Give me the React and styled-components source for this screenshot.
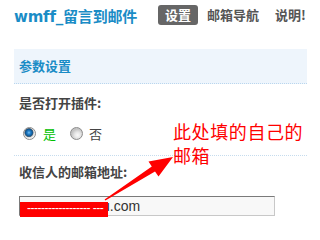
import React from "react";
import styled, { createGlobalStyle } from "styled-components";

const Global = createGlobalStyle`
  html, body { margin: 0; padding: 0; background: #fff; }
  body { width: 307px; height: 226px; overflow: hidden; position: relative;
    font-family: "Liberation Sans", "Noto Sans CJK SC", sans-serif; }
`;

const Page = styled.div`
  position: relative;
  width: 307px;
  height: 226px;
  overflow: hidden;
`;

const TopBar = styled.div`
  display: flex;
  align-items: center;
  height: 20px;
  padding: 5px 0 0 14px;
  white-space: nowrap;
`;

const Title = styled.div`
  font-family: "DejaVu Sans", "Noto Sans CJK SC", sans-serif;
  font-weight: bold;
  font-size: 15px;
  color: #1a8cc6;
  margin-right: 21px;
  letter-spacing: -0.2px;
`;

const Nav = styled.div`
  display: flex;
  gap: 2px;
`;

const Tab = styled.div`
  height: 20px;
  line-height: 20px;
  padding: 0 7px;
  border-radius: 3px;
  font-family: "Noto Sans CJK SC", sans-serif;
  font-weight: bold;
  font-size: 13px;
  color: ${p => (p.$active ? "#fff" : "#555")};
  background: ${p => (p.$active ? "#666" : "transparent")};
`;

const Panel = styled.div`
  margin: 24px 0 0 14px;
`;

const PanelHeader = styled.div`
  height: 34px;
  line-height: 34px;
  padding-left: 5px;
  background: #eef5fc;
  border-bottom: 1px dotted #b9d6ee;
  font-family: "Noto Sans CJK SC", sans-serif;
  font-weight: bold;
  font-size: 13px;
  color: #1a8cc6;
`;

const Section = styled.div`
  padding: ${p => p.$top}px 0 ${p => p.$bottom}px 5px;
  border-bottom: ${p => (p.$line ? "1px dotted #c6dcee" : "none")};
`;

const Label = styled.div`
  height: 20px;
  line-height: 20px;
  font-family: "Noto Sans CJK SC", sans-serif;
  font-weight: bold;
  font-size: 13px;
  color: #444;
`;

const RadioRow = styled.div`
  display: flex;
  align-items: center;
  height: 20px;
  margin: 10px 0 0 4px;
`;

const Radio = styled.span`
  width: 11px;
  height: 11px;
  border-radius: 50%;
  border: 1px solid #8c8c8c;
  box-sizing: content-box;
  background: ${p =>
    p.$checked
      ? "radial-gradient(circle at 45% 42%, #7cc4f5 0, #2a86cf 1.5px, #0d5592 3.5px, #5a6a78 4.2px, #dcdcdc 4.8px, #f4f4f4 6px)"
      : "radial-gradient(circle at 60% 65%, #fafafa 0, #e6e6e6 3px, #c4c4c4 6px)"};
`;

const RadioText = styled.span`
  font-family: "Noto Sans CJK SC", sans-serif;
  font-size: 13px;
  color: ${p => p.$color};
  margin: 0 ${p => p.$after}px 0 ${p => p.$before}px;
`;

const Input = styled.div`
  margin-top: 14px;
  height: 18px;
  width: 172px;
  border: 1px solid #c8c8c8;
  border-top-color: #7a7a7a;
  border-left-color: #7a7a7a;
  background: #f8f8f8;
  display: flex;
  align-items: center;
  padding-left: 82px;
  box-sizing: content-box;
  font-family: "Liberation Sans", sans-serif;
  font-size: 14px;
  color: #333;
`;

const Mask = styled.div`
  position: absolute;
  left: 20px;
  top: 202px;
  width: 88px;
  height: 15px;
  background: #ff0000;
  display: flex;
  align-items: flex-start;
  padding-left: 7px;
  box-sizing: border-box;
  overflow: hidden;
`;

const MaskDashes = styled.span`
  font-family: "Liberation Sans", sans-serif;
  font-size: 12px;
  line-height: 13px;
  color: #fff;
  white-space: nowrap;
  letter-spacing: -0.5px;
`;

const Note = styled.div`
  position: absolute;
  left: 173px;
  top: 119px;
  font-family: "Noto Sans CJK SC", sans-serif;
  font-size: 18px;
  line-height: 24px;
  letter-spacing: 0.6px;
  color: #ff0000;
  white-space: nowrap;
`;

const ArrowSvg = styled.svg`
  position: absolute;
  left: 0;
  top: 0;
  pointer-events: none;
`;

export default function App() {
  return (
    <Page>
      <Global />
      <TopBar>
        <Title>wmff_留言到邮件</Title>
        <Nav>
          <Tab $active>设置</Tab>
          <Tab>邮箱导航</Tab>
          <Tab>说明!</Tab>
        </Nav>
      </TopBar>
      <Panel>
        <PanelHeader>参数设置</PanelHeader>
        <Section $top={9} $bottom={12} $line>
          <Label>是否打开插件:</Label>
          <RadioRow>
            <Radio $checked />
            <RadioText $color="#00c000" $before={7} $after={14}>是</RadioText>
            <Radio />
            <RadioText $color="#444" $before={6} $after={0}>否</RadioText>
          </RadioRow>
        </Section>
        <Section $top={6} $bottom={0}>
          <Label>收信人的邮箱地址:</Label>
          <Input>u.com</Input>
        </Section>
      </Panel>
      <Mask>
        <MaskDashes>------------------ ---</MaskDashes>
      </Mask>
      <ArrowSvg width="307" height="226" viewBox="0 0 307 226">
        <polygon
          fill="#ff0000"
          points="104.6,199.5 151.8,166.5 148.5,161.5 173,157 158.5,176.5 155,171.5 105.4,200.6"
        />
      </ArrowSvg>
      <Note>
        此处填的自己的
        <br />
        邮箱
      </Note>
    </Page>
  );
}
